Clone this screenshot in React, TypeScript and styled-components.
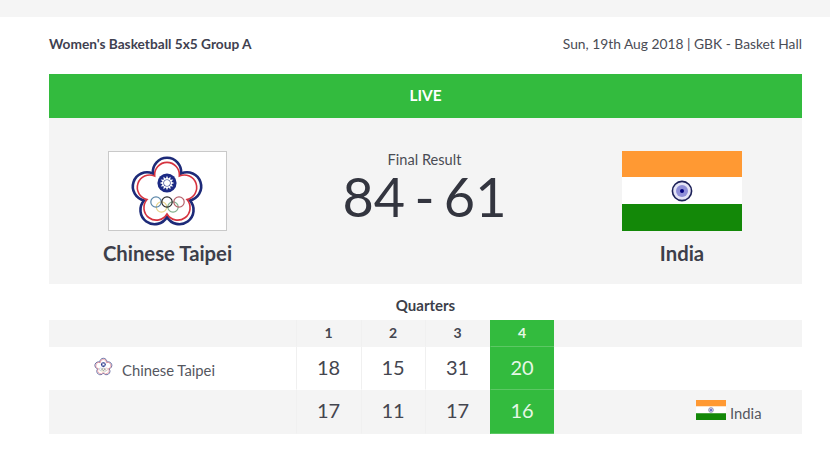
import React from "react";
import styled, { createGlobalStyle } from "styled-components";

const GlobalStyle = createGlobalStyle`
  html, body {
    margin: 0;
    padding: 0;
    background: #fff;
    font-family: Lato, "Open Sans", sans-serif;
    color: #3d3f4a;
  }
`;

const TopStrip = styled.div`
  height: 17px;
  background: #f5f5f5;
`;

const Page = styled.main`
  padding: 0 28px 0 49px;
`;

const Header = styled.header`
  height: 53px;
  padding-bottom: 4px;
  display: flex;
  align-items: center;
  justify-content: space-between;
  font-size: 13.8px;
`;

const Title = styled.span`
  font-weight: 700;
  font-size: 13.7px;
  color: #3f4150;
`;

const Venue = styled.span`
  color: #4a4c55;
`;

const LiveBar = styled.div`
  height: 41px;
  padding-bottom: 3px;
  background: #33bb3e;
  color: #fff;
  font-size: 15.4px;
  font-weight: 700;
  display: flex;
  align-items: center;
  justify-content: center;
`;

const ScorePanel = styled.section`
  height: 166px;
  background: #f4f4f4;
  display: grid;
  grid-template-columns: 237px 1fr 240px;
`;

const Team = styled.div`
  padding-top: 33px;
  display: flex;
  flex-direction: column;
  align-items: center;
`;

const TeamName = styled.div`
  margin-top: 9px;
  font-size: 20.3px;
  line-height: 26px;
  font-weight: 700;
  color: #3d3f4a;
`;

const Result = styled.div`
  padding-top: 33px;
  padding-left: 1px;
  display: flex;
  flex-direction: column;
  align-items: center;
`;

const ResultLabel = styled.div`
  font-size: 14.6px;
  line-height: 18px;
  color: #4a4c55;
`;

const Score = styled.div`
  font-size: 54px;
  line-height: 56px;
  word-spacing: -4.5px;
  color: #33353f;
`;

const QuartersTitle = styled.div`
  height: 31px;
  padding-top: 5px;
  display: flex;
  align-items: center;
  justify-content: center;
  font-size: 15px;
  font-weight: 700;
  color: #3d3f4a;
`;

const Table = styled.div`
  display: grid;
  grid-template-columns: 247px 65px 64px 65px 64px 248px;
  grid-template-rows: 27px 43px 44px;
`;

const Cell = styled.div<{ $shade?: boolean; $head?: boolean; $active?: boolean; $lift: number }>`
  display: flex;
  align-items: center;
  justify-content: center;
  box-sizing: border-box;
  padding-right: 1px;
  padding-bottom: ${({ $lift }) => $lift}px;
  font-size: ${({ $head }) => ($head ? "14px" : "20px")};
  font-weight: ${({ $head }) => ($head ? 700 : 400)};
  background: ${({ $shade, $active }) =>
    $active ? "#33bb3e" : $shade ? "#f4f4f4" : "#fff"};
  color: ${({ $active }) => ($active ? "#e6f7e6" : "#44464f")};
  border-left: 1px solid ${({ $active }) => ($active ? "transparent" : "#f0f0f0")};
  border-bottom: 1px solid ${({ $active }) => ($active ? "#5cc864" : "transparent")};
`;

const BlankCell = styled.div<{ $shade?: boolean }>`
  background: ${({ $shade }) => ($shade ? "#f4f4f4" : "#fff")};
`;

const TeamCell = styled.div<{ $shade?: boolean; $inset: number; $top: number }>`
  display: flex;
  align-items: flex-start;
  box-sizing: border-box;
  padding-left: ${({ $inset }) => $inset}px;
  padding-top: ${({ $top }) => $top}px;
  background: ${({ $shade }) => ($shade ? "#f4f4f4" : "#fff")};
`;

const TeamCellInner = styled.div`
  display: flex;
  align-items: flex-end;
  gap: 4px;
  font-size: 14.8px;
  line-height: 14px;
  color: #55575f;
`;

const FlagBox = styled.div<{ $large?: boolean }>`
  line-height: 0;
  background: #fff;
  ${({ $large }) => ($large ? "border: 1px solid #c9c9c9;" : "")}
`;

// plum blossom outline, five lobes joined at inner notches
const blossom = (cx: number, cy: number, notch: number, lobe: number) => {
  const pts = [0, 1, 2, 3, 4].map((i) => {
    const a = ((-126 + i * 72) * Math.PI) / 180;
    return [cx + notch * Math.cos(a), cy + notch * Math.sin(a)];
  });
  let d = `M${pts[0][0].toFixed(2)} ${pts[0][1].toFixed(2)}`;
  for (let i = 1; i <= 5; i++) {
    const p = pts[i % 5];
    d += ` A${lobe} ${lobe} 0 1 1 ${p[0].toFixed(2)} ${p[1].toFixed(2)}`;
  }
  return d + "Z";
};

const sunRays = (cx: number, cy: number, outer: number, inner: number) => {
  const out: string[] = [];
  for (let i = 0; i < 24; i++) {
    const r = i % 2 ? inner : outer;
    const a = (i * 15 * Math.PI) / 180;
    out.push(`${(cx + r * Math.sin(a)).toFixed(2)},${(cy - r * Math.cos(a)).toFixed(2)}`);
  }
  return out.join(" ");
};

const TaipeiFlag = ({ width, height }: { width: number; height: number }) => (
  <svg width={width} height={height} viewBox="0 0 117 78">
    <rect width="117" height="78" fill="#fff" />
    <path d={blossom(58, 41, 24, 14.2)} fill="#fff" stroke="#1d2a78" strokeWidth="2.6" />
    <path d={blossom(58, 41, 21, 12.4)} fill="#fff" stroke="#d6333f" strokeWidth="1.6" />
    <circle cx="58" cy="31" r="9.6" fill="#1c2a84" />
    <polygon points={sunRays(58, 31, 7.2, 4.6)} fill="#fff" />
    <circle cx="58" cy="31" r="3.6" fill="#1c2a84" />
    <circle cx="58" cy="31" r="3" fill="#fff" />
    <g fill="none" strokeWidth="1.2">
      <circle cx="52.5" cy="55" r="5.2" stroke="#e8d48c" />
      <circle cx="64" cy="55" r="5.2" stroke="#7fae8a" />
      <circle cx="47" cy="50" r="5.2" stroke="#5a86a8" />
      <circle cx="58" cy="50" r="5.2" stroke="#2c2c2c" />
      <circle cx="70" cy="50" r="5.2" stroke="#b5606a" />
    </g>
  </svg>
);

const IndiaFlag = ({ width, height }: { width: number; height: number }) => (
  <svg width={width} height={height} viewBox="0 0 120 80" preserveAspectRatio="none">
    <rect width="120" height="26" fill="#ff9933" />
    <rect y="26" width="120" height="27" fill="#fff" />
    <rect y="53" width="120" height="27" fill="#138808" />
    <circle cx="60" cy="40" r="9.6" fill="#e4e4f6" stroke="#1c2058" strokeWidth="1.6" />
    <circle cx="60" cy="40" r="6" fill="#8f8fd8" />
    <circle cx="60" cy="40" r="2" fill="#000080" />
  </svg>
);

const quarters = [
  { label: "1", home: 18, away: 17 },
  { label: "2", home: 15, away: 11 },
  { label: "3", home: 31, away: 17 },
  { label: "4", home: 20, away: 16 },
];

export default function App() {
  return (
    <>
      <GlobalStyle />
      <TopStrip />
      <Page>
        <Header>
          <Title>Women's Basketball 5x5 Group A</Title>
          <Venue>Sun, 19th Aug 2018 | GBK - Basket Hall</Venue>
        </Header>
        <LiveBar>LIVE</LiveBar>
        <ScorePanel>
          <Team>
            <FlagBox $large>
              <TaipeiFlag width={117} height={78} />
            </FlagBox>
            <TeamName>Chinese Taipei</TeamName>
          </Team>
          <Result>
            <ResultLabel>Final Result</ResultLabel>
            <Score>84 - 61</Score>
          </Result>
          <Team>
            <FlagBox>
              <IndiaFlag width={120} height={80} />
            </FlagBox>
            <TeamName>India</TeamName>
          </Team>
        </ScorePanel>
        <QuartersTitle>Quarters</QuartersTitle>
        <Table>
          <BlankCell $shade />
          {quarters.map((q, i) => (
            <Cell key={q.label} $head $shade $active={i === 3} $lift={2}>
              {q.label}
            </Cell>
          ))}
          <BlankCell $shade />

          <TeamCell $inset={40} $top={9}>
            <TeamCellInner>
              <TaipeiFlag width={29} height={21} />
              <span>Chinese Taipei</span>
            </TeamCellInner>
          </TeamCell>
          {quarters.map((q, i) => (
            <Cell key={q.label} $active={i === 3} $lift={2}>
              {q.home}
            </Cell>
          ))}
          <BlankCell />

          <BlankCell $shade />
          {quarters.map((q, i) => (
            <Cell key={q.label} $shade $active={i === 3} $lift={3}>
              {q.away}
            </Cell>
          ))}
          <TeamCell $shade $inset={142} $top={10}>
            <TeamCellInner>
              <IndiaFlag width={30} height={20} />
              <span>India</span>
            </TeamCellInner>
          </TeamCell>
        </Table>
      </Page>
    </>
  );
}
